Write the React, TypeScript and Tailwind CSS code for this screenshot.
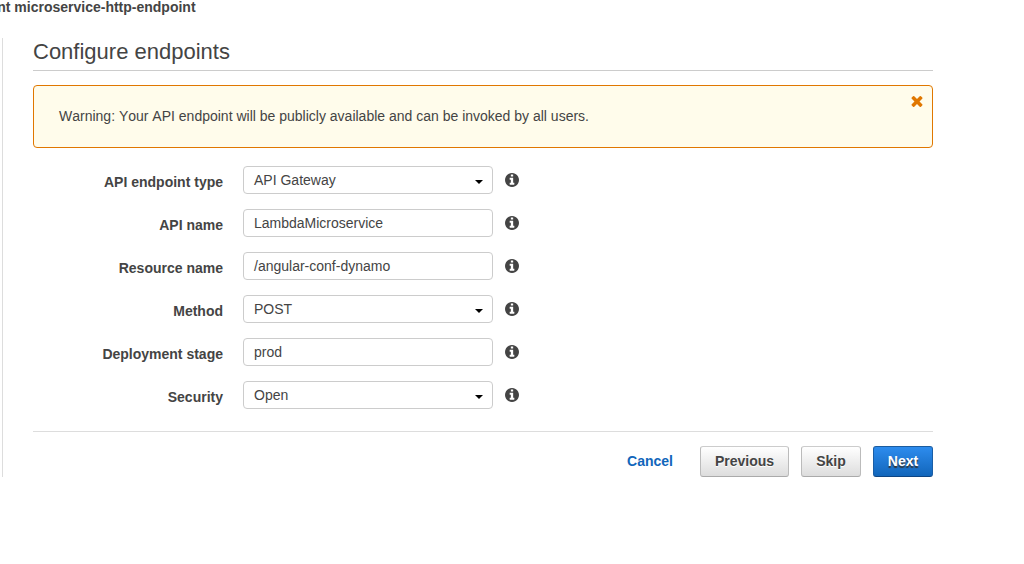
import React from "react";

function InfoIcon() {
  return (
    <svg viewBox="0 128 1536 1536" className="ml-3 h-[14px] w-[14px] shrink-0" fill="#444" aria-hidden="true">
      <path d="M1024 1376v-160q0-14-9-23t-23-9h-96v-512q0-14-9-23t-23-9h-320q-14 0-23 9t-9 23v160q0 14 9 23t23 9h96v320h-96q-14 0-23 9t-9 23v160q0 14 9 23t23 9h448q14 0 23-9t9-23zm-128-896v-160q0-14-9-23t-23-9h-192q-14 0-23 9t-9 23v160q0 14 9 23t23 9h192q14 0 23-9t9-23zm640 416q0 209-103 385.5t-279.5 279.5-385.5 103-385.5-103-279.5-279.5-103-385.5 103-385.5 279.5-279.5 385.5-103 385.5 103 279.5 279.5 103 385.5z" />
    </svg>
  );
}

function CloseIcon() {
  return (
    <svg viewBox="248 366 1296 1188" className="h-[11px] w-[12px]" fill="#e07700" aria-hidden="true">
      <path d="M1490 1322q0 40-28 68l-136 136q-28 28-68 28t-68-28l-294-294-294 294q-28 28-68 28t-68-28l-136-136q-28-28-28-68t28-68l294-294-294-294q-28-28-28-68t28-68l136-136q28-28 68-28t68 28l294 294 294-294q28-28 68-28t68 28l136 136q28 28 28 68t-28 68l-294 294 294 294q28 28 28 68z" />
    </svg>
  );
}

type Field = { label: string; value: string; select?: boolean };

const fields: Field[] = [
  { label: "API endpoint type", value: "API Gateway", select: true },
  { label: "API name", value: "LambdaMicroservice" },
  { label: "Resource name", value: "/angular-conf-dynamo" },
  { label: "Method", value: "POST", select: true },
  { label: "Deployment stage", value: "prod" },
  { label: "Security", value: "Open", select: true },
];

function FieldRow({ label, value, select }: Field) {
  return (
    <div className="flex h-7 items-center">
      <div className="w-[190px] pt-1 text-right font-bold">{label}</div>
      <div className="ml-5 flex h-7 w-[250px] items-center justify-between rounded-[4px] border border-[#ccc] bg-white pr-[9px] pl-[10px]">
        <span>{value}</span>
        {select && (
          <svg viewBox="0 0 8 4" className="mt-1 h-1 w-2" fill="#000" aria-hidden="true">
            <path d="M0 0H8L4 4Z" />
          </svg>
        )}
      </div>
      <InfoIcon />
    </div>
  );
}

const greyButton =
  "h-[31px] rounded-[3px] border border-[#bbb] border-t-[#ccc] border-b-[#aaa] bg-linear-to-b from-white to-[#ddd] pb-[2px] font-bold [text-shadow:0_1px_0_#fff]";

export default function App() {
  return (
    <div className="h-[564px] overflow-hidden bg-white font-['Liberation_Sans',Arial,sans-serif] text-[14px] leading-5 text-[#444]">
      <div className="flex h-[38px] w-[195.6px] justify-end font-bold whitespace-nowrap">
        <span className="-mt-[3px]">nt microservice-http-endpoint</span>
      </div>
      <main className="ml-[2px] h-[439px] w-[931px] border-l border-[#ddd] pl-[30px]">
        <h1 className="h-[33px] border-b border-[#ccc] text-[22px] leading-[27px]">Configure endpoints</h1>
        <div className="mt-[14px] flex h-[63px] justify-between rounded-[4px] border border-[#e07700] bg-[#fffceb] pr-[9px] pl-[25px]">
          <p className="pt-5 [font-kerning:none]">
            Warning: Your API endpoint will be publicly available and can be invoked by all users.
          </p>
          <button className="h-[11px] pt-[10px]" aria-label="Close">
            <CloseIcon />
          </button>
        </div>
        <div className="mt-[18px] flex flex-col gap-[15px]">
          {fields.map((f) => (
            <FieldRow key={f.label} {...f} />
          ))}
        </div>
        <div className="mt-[22px] flex items-center justify-end gap-3 border-t border-[#ddd] pt-[14px]">
          <a className="mr-[15px] pb-[2px] font-bold text-[#1166bb]">Cancel</a>
          <button className={`${greyButton} w-[89px]`}>Previous</button>
          <button className={`${greyButton} w-[60px]`}>Skip</button>
          <button className="h-[31px] w-[60px] rounded-[3px] border border-[#1a5ea6] border-t-[#1c5c9e] border-b-[#0d4583] bg-linear-to-b from-[#2d8cee] to-[#1166bb] pb-[2px] font-bold text-white [text-shadow:0_2px_1px_#333]">
            Next
          </button>
        </div>
      </main>
    </div>
  );
}
